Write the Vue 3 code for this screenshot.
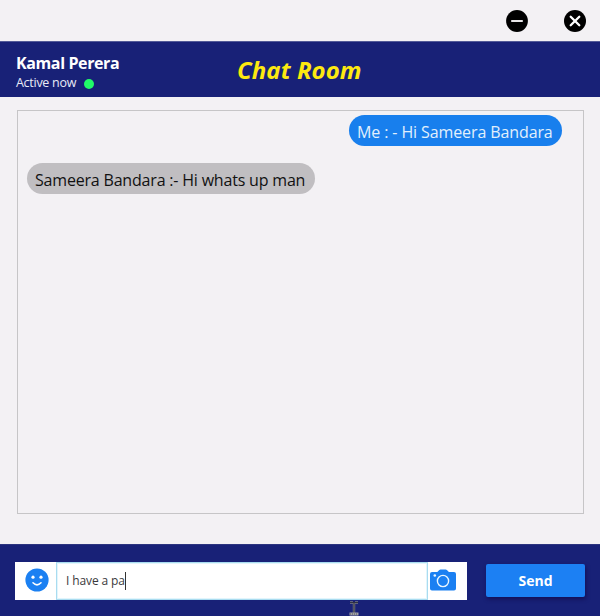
<script setup>
import { ref } from 'vue'

const messages = ref([
  { id: 1, mine: true, text: 'Me : - Hi Sameera Bandara' },
  { id: 2, mine: false, text: 'Sameera Bandara :- Hi whats up man' },
])
const draft = ref('I have a pa')
</script>

<template>
  <div class="window">
    <div class="titlebar">
      <svg class="control" viewBox="0 0 22 22">
        <circle cx="11" cy="11" r="10.9" fill="#000" />
        <path d="M5.2 11H16.8" stroke="#e8e6e8" stroke-width="2" />
      </svg>
      <svg class="control" viewBox="0 0 22 22">
        <circle cx="11" cy="11" r="11" fill="#000" />
        <path d="M6.7 6.7l8.6 8.6M15.3 6.7l-8.6 8.6" stroke="#fff" stroke-width="2.3" stroke-linecap="round" />
      </svg>
    </div>

    <header class="header">
      <div class="user">
        <div><span class="name">Kamal Perera</span></div>
        <div class="status"><span class="status-text">Active now</span><i class="dot"></i></div>
      </div>
      <h1 class="title">Chat Room</h1>
    </header>

    <main class="body">
      <div class="messages">
        <div v-for="m in messages" :key="m.id" class="row" :class="{ mine: m.mine }">
          <div class="bubble"><span>{{ m.text }}</span></div>
        </div>
      </div>
    </main>

    <footer class="footer">
      <div class="composer">
        <div class="tool emoji">
          <svg width="24" height="24" viewBox="0 0 24 24">
            <circle cx="12" cy="12" r="11.6" fill="#1b80f2" />
            <circle cx="8" cy="9.2" r="1.6" fill="#fff" />
            <circle cx="16" cy="9.2" r="1.6" fill="#fff" />
            <path d="M8 14.8q4 4 8 0" fill="none" stroke="#fff" stroke-width="1.6" stroke-linecap="round" />
          </svg>
        </div>
        <div class="field"><span class="draft">{{ draft }}</span><i class="caret"></i></div>
        <div class="tool camera">
          <svg width="26" height="22" viewBox="0 0 26 22">
            <path d="M2 3H7.3L9.3 .9Q9.8 .4 10.5 .4H15.7Q16.4 .4 16.9 .9L18.9 3H24Q26 3 26 5V19.4Q26 21.4 24 21.4H2Q0 21.4 0 19.4V5Q0 3 2 3Z" fill="#1b80f2" />
            <circle cx="13" cy="12" r="5.6" fill="none" stroke="#e9f6ff" stroke-width="1.4" />
            <circle cx="4.8" cy="6.5" r="1.3" fill="#e9f6ff" />
          </svg>
        </div>
      </div>
      <button class="send"><span>Send</span></button>
      <svg class="cursor" viewBox="0 0 10 16">
        <path d="M1 1.5H4M6 1.5H9M5 2V13" fill="none" stroke="#777984" stroke-width="2.4" />
        <path d="M1 1.5H9M5 2V13" fill="none" stroke="#303243" stroke-width="1" />
        <path d="M.5 13H9.5" stroke="#a3a3a6" stroke-width="3" />
        <path d="M1 13H9" stroke="#55575f" stroke-width="1" stroke-dasharray="1 1" />
      </svg>
    </footer>
  </div>
</template>

<style>
body {
  margin: 0;
}
</style>

<style scoped>
.window {
  box-sizing: border-box;
  width: 600px;
  height: 616px;
  display: flex;
  flex-direction: column;
  overflow: hidden;
  background: #f3f1f4;
  font-family: 'Open Sans', 'Noto Sans', sans-serif;
}

.titlebar {
  height: 41px;
  box-sizing: border-box;
  padding: 10px 14px 0 0;
  display: flex;
  justify-content: flex-end;
  gap: 36px;
}

.control {
  width: 22px;
  height: 22px;
}

.header {
  height: 56px;
  box-sizing: border-box;
  border-top: 1px solid #535b98;
  background: #182177;
  display: grid;
  grid-template-columns: 237px 1fr;
}

.user {
  padding: 11px 0 0 16px;
  color: #fff;
}

.name {
  display: block;
  font-size: 16px;
  line-height: 21px;
  font-weight: 700;
  letter-spacing: -0.38px;
  white-space: nowrap;
}

.status {
  display: flex;
  align-items: center;
  height: 18px;
  gap: 8px;
  font-size: 12.5px;
  line-height: 18px;
  letter-spacing: -0.28px;
  color: #e9ebf6;
}

.status-text {
  width: 60px;
  white-space: nowrap;
}

.dot {
  width: 10px;
  height: 10px;
  margin-top: 1px;
  border-radius: 50%;
  background: #20fb68;
}

.title {
  margin: 11px 0 0;
  font-size: 24px;
  line-height: 34px;
  font-weight: 700;
  font-style: italic;
  letter-spacing: 0.08px;
  color: #fde910;
  white-space: nowrap;
}

.body {
  height: 447px;
  box-sizing: border-box;
  padding: 13px 16px 30px 17px;
}

.messages {
  height: 404px;
  box-sizing: border-box;
  border: 1px solid #c6c5c7;
  padding: 4px 21px 0 8.5px;
  display: flex;
  flex-direction: column;
  gap: 17px;
}

.row {
  display: flex;
}

.row.mine {
  justify-content: flex-end;
}

.bubble {
  box-sizing: border-box;
  width: 288px;
  height: 31px;
  padding: 0 8.5px;
  border-radius: 15.5px;
  background: #c0bec1;
  color: #111;
  font-size: 16px;
  line-height: 34px;
  letter-spacing: -0.19px;
  white-space: nowrap;
}

.mine .bubble {
  width: 213.5px;
  background: #187fed;
  color: #e1effc;
  letter-spacing: -0.11px;
}

.footer {
  position: relative;
  height: 72px;
  box-sizing: border-box;
  border-top: 1px solid #2c347f;
  padding: 17px 15px 0;
  background: #182177;
  display: flex;
}

.composer {
  width: 452px;
  height: 38px;
  margin-right: 19px;
  background: #fff;
  display: flex;
}

.tool {
  display: flex;
  align-items: center;
}

.emoji {
  width: 41px;
  box-sizing: border-box;
  padding: 0 0 2px 9.5px;
}

.field {
  box-sizing: border-box;
  width: 372px;
  border: 1px solid #a9dcf0;
  box-shadow: inset 0 0 0 1px #e2f5fc;
  padding-left: 9px;
  display: flex;
  align-items: center;
  color: #3b3a3c;
}

.draft {
  width: 59px;
  font-size: 12px;
  line-height: 18px;
  letter-spacing: -0.12px;
  white-space: nowrap;
}

.caret {
  width: 1px;
  height: 18px;
  background: #333;
}

.camera {
  padding: 0 0 2px 2px;
}

.send {
  width: 99px;
  height: 33px;
  margin: 2px 0 0;
  padding: 0;
  border: 0;
  border-radius: 2px;
  background: #1c80f3;
  box-shadow: 1px 2px 4px rgba(17, 7, 70, 0.7);
  color: #fff;
  font-family: inherit;
  font-size: 14px;
  line-height: 33px;
  font-weight: 700;
}

.cursor {
  position: absolute;
  left: 349px;
  top: 56px;
  width: 10px;
  height: 16px;
}
</style>
